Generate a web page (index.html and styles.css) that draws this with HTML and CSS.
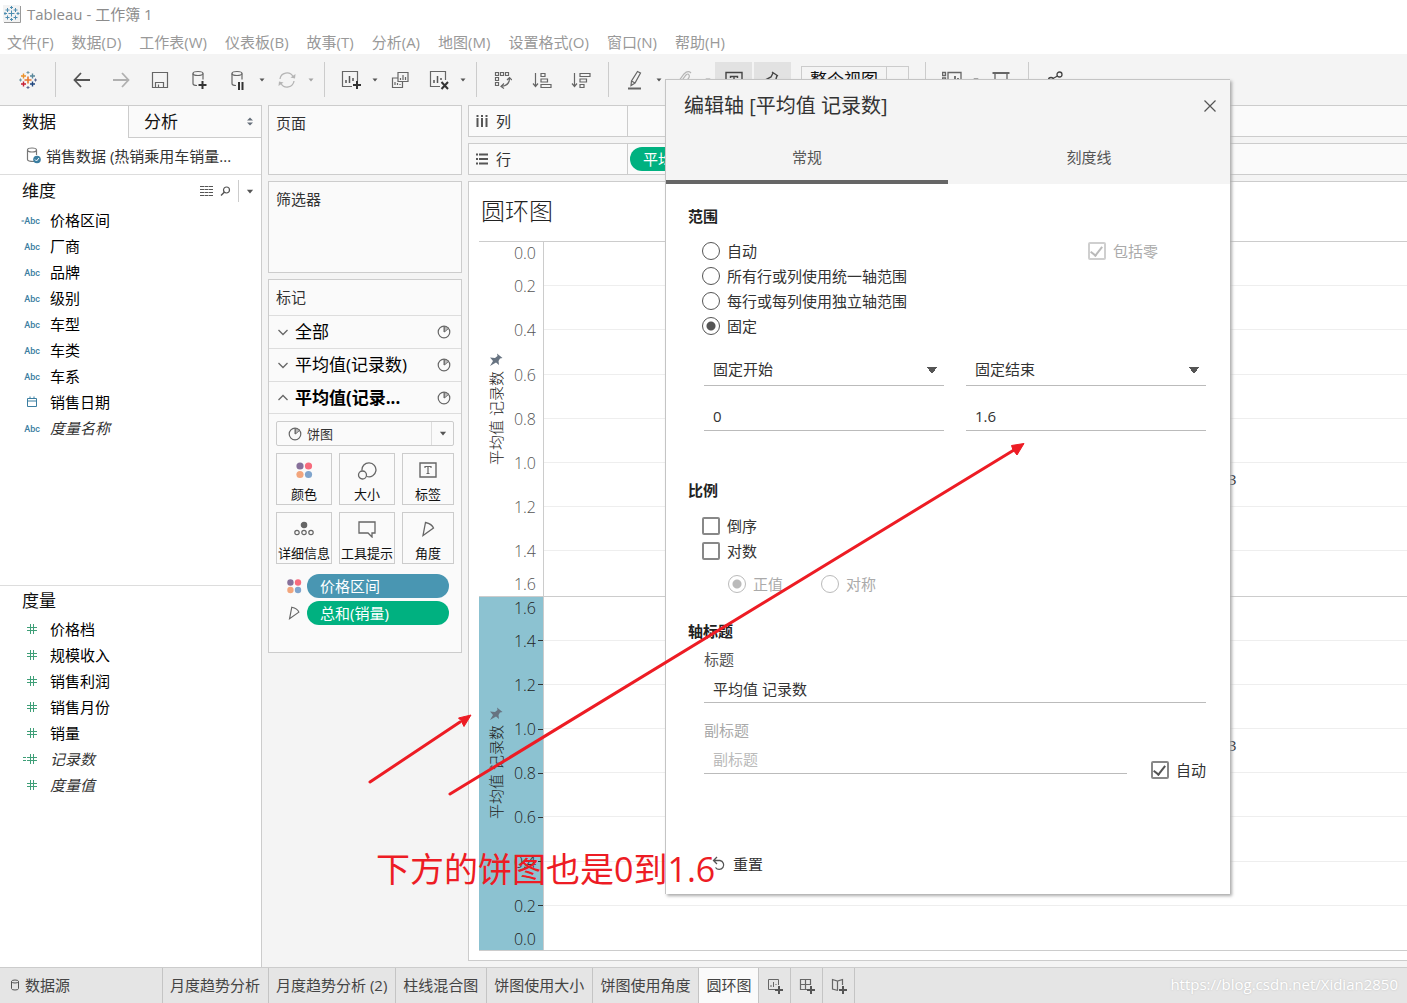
FILE: index.html
```html
<!DOCTYPE html>
<html lang="zh-CN">
<head>
<meta charset="utf-8">
<title>Tableau - 工作簿 1</title>
<link rel="stylesheet" href="styles.css">
</head>
<body>
<svg class="defs" aria-hidden="true">
  <symbol id="pie" viewBox="0 0 14 14"><circle cx="7" cy="7" r="5.800" fill="none" stroke="#666" stroke-width="1.200"/><path d="M7 1v6l4.500-4.200" fill="none" stroke="#666"/><path d="M7.500 1.500a5.500 5.500 0 0 1 4 2L7.500 7z" fill="#bbb" stroke="#666" stroke-width=".8"/></symbol>
  <symbol id="down" viewBox="0 0 12 12"><path d="M1.500 4l4.500 4.500L10.500 4" fill="none" stroke="#666" stroke-width="1.300"/></symbol>
  <symbol id="up" viewBox="0 0 12 12"><path d="M1.500 8L6 3.500 10.500 8" fill="none" stroke="#666" stroke-width="1.300"/></symbol>
  <symbol id="hash" viewBox="0 0 12 12"><path d="M4.500 1v10M7.500 1v10M1 4.500h10M1 7.500h10" stroke="#3f9f78" fill="none"/></symbol>
  <symbol id="dots" viewBox="0 0 18 18"><circle cx="5" cy="5" r="3.600" fill="#86709a"/><circle cx="13.500" cy="5" r="3.600" fill="#f76b7d"/><circle cx="5" cy="13.500" r="3.600" fill="#f2a57c"/><circle cx="13.500" cy="13.500" r="3.600" fill="#7fa4cc"/></symbol>
  <symbol id="angle" viewBox="0 0 16 18"><path d="M5.500 2.500Q12 4 13.500 8L3 15.500z" fill="none" stroke="#666" stroke-width="1.300"/></symbol>
  <symbol id="pin" viewBox="0 0 14 14"><path d="M8 .5l5.500 4.500-2.500.5-1.500 2.500.5 4-3-2.500L1 13l3-5L1 4.500l5 .5L8.500 3z" fill="#677381"/></symbol>
  <symbol id="caret" viewBox="0 0 6 4"><path d="M.5.5h5L3 3.500z" fill="#555"/></symbol>
</svg>

<header class="titlebar">
  <svg class="app-icon" viewBox="0 0 18 18"><rect x="0" y="0" width="17" height="17" fill="#f3f3f3"/><path d="M17.500 1v16.500H1" fill="none" stroke="#999"/><path d="M8.500 5.500v6M5.500 8.500h6M4.500 3v4M2.500 5h4M12.500 3v4M10.500 5h4M4.500 10.500v4M2.500 12.500h4M12.500 10.500v4M10.500 12.500h4M8.500 1v3M7 2.500h3M8.500 13v3M7 14.500h3M2 7v3M1 8.500h3M15 7v3M13.500 8.500h3" stroke="#4e8db0" fill="none"/></svg>
  <span>Tableau - 工作簿 1</span>
</header>
<nav class="menubar">
  <a href="#">文件(F)</a><a href="#">数据(D)</a><a href="#">工作表(W)</a><a href="#">仪表板(B)</a><a href="#">故事(T)</a><a href="#">分析(A)</a><a href="#">地图(M)</a><a href="#">设置格式(O)</a><a href="#">窗口(N)</a><a href="#">帮助(H)</a>
</nav>

<div class="toolbar">
  <button class="tool" aria-label="开始页"><svg width="18" height="18" viewBox="0 0 18 18" fill="none"><path d="M9 5.500v7M5.500 9h7" stroke="#e8762d" stroke-width="1.600"/><path d="M4.500 2.500v5M2 5h5" stroke="#eb9129" stroke-width="1.400"/><path d="M13.500 2.500v5M11 5h5" stroke="#59879b" stroke-width="1.400"/><path d="M4.500 10.500v5M2 13h5" stroke="#c72035" stroke-width="1.400"/><path d="M13.500 10.500v5M11 13h5" stroke="#1f457e" stroke-width="1.400"/><path d="M9 0v3M7.500 1.500h3M1.500 7.500v3M0 9h3" stroke="#7199a6"/><path d="M9 15v3M7.500 16.500h3M16.500 7.500v3M15 9h3" stroke="#5b6591"/></svg></button>
  <span class="sep"></span>
  <button class="tool" aria-label="后退"><svg width="18" height="16" viewBox="0 0 18 16"><path d="M8 1L1.500 8 8 15M2 8h15" fill="none" stroke="#555" stroke-width="1.800"/></svg></button>
  <button class="tool" aria-label="前进"><svg width="18" height="16" viewBox="0 0 18 16"><path d="M10 1l6.500 7-6.500 7M16 8H1" fill="none" stroke="#b0b0b0" stroke-width="1.800"/></svg></button>
  <button class="tool" aria-label="保存"><svg width="18" height="18" viewBox="0 0 18 18"><path d="M1.500 1.500h15v15h-15zM4.500 16v-4.500h8V16M7.500 16v-2.500" fill="none" stroke="#666" stroke-width="1.200"/></svg></button>
  <button class="tool" aria-label="新建数据源"><svg width="18" height="20" viewBox="0 0 18 20"><ellipse cx="8" cy="3.500" rx="5" ry="2" fill="none" stroke="#666" stroke-width="1.200"/><path d="M3 3.500v10q0 2 4 2M13 3.500v6" fill="none" stroke="#666" stroke-width="1.200"/><path d="M12.500 11v8M8.500 15h8" stroke="#333" stroke-width="2"/></svg></button>
  <button class="tool" aria-label="暂停自动更新"><svg width="18" height="20" viewBox="0 0 18 20"><ellipse cx="8" cy="3.500" rx="5" ry="2" fill="none" stroke="#666" stroke-width="1.200"/><path d="M3 3.500v10q0 2 4 2M13 3.500v6" fill="none" stroke="#666" stroke-width="1.200"/><path d="M10 12v8M13.500 12v8" stroke="#333" stroke-width="2"/></svg></button>
  <button class="drop" aria-label="更新选项"><svg width="6" height="4"><use href="#caret"/></svg></button>
  <button class="tool off" aria-label="运行更新"><svg width="18" height="18" viewBox="0 0 18 18"><path d="M2 8a7 7 0 0 1 13-2.500M16 10a7 7 0 0 1-13 2.500" fill="none" stroke="#777" stroke-width="1.300"/><path d="M17.500 3l-.5 4.500-4.500-1zM.5 15l.5-4.500 4.500 1z" fill="#777"/></svg></button>
  <button class="drop off" aria-label="运行选项"><svg width="6" height="4"><use href="#caret"/></svg></button>
  <span class="sep"></span>
  <button class="tool" aria-label="新建工作表"><svg width="20" height="20" viewBox="0 0 20 20"><path d="M11 16.500H1.500v-15h15V11" fill="none" stroke="#666" stroke-width="1.200"/><path d="M5 13v-3M8.500 13V6M12 11V8" stroke="#555" stroke-width="1.500"/><path d="M16 11v8M12 15h8" stroke="#333" stroke-width="2"/></svg></button>
  <button class="drop" aria-label="新建选项"><svg width="6" height="4"><use href="#caret"/></svg></button>
  <button class="tool" aria-label="复制工作表"><svg width="18" height="18" viewBox="0 0 18 18"><path d="M7 1.500h10v9H7zM7 7H1.500v9.500h10v-6M9.500 9V7M12 9V4M14.500 9V6M4 14v-3M6.500 14v-2M9 14v-1" fill="none" stroke="#666" stroke-width="1.200"/></svg></button>
  <button class="tool" aria-label="清除工作表"><svg width="20" height="20" viewBox="0 0 20 20"><path d="M11 16.500H1.500v-15h15V10" fill="none" stroke="#666" stroke-width="1.200"/><path d="M5 13v-3M8.500 13V6M12 10V8" stroke="#555" stroke-width="1.500"/><path d="M12.500 12l6.500 7M19 12l-6.500 7" stroke="#333" stroke-width="2"/></svg></button>
  <button class="drop" aria-label="清除选项"><svg width="6" height="4"><use href="#caret"/></svg></button>
  <span class="sep"></span>
  <button class="tool" aria-label="交换行和列"><svg width="18" height="18" viewBox="0 0 18 18" fill="none" stroke="#666"><path d="M1.500 1.500h3v3h-3zM6.500 1.500h3v3h-3zM11.500 1.500h3v3h-3zM1.500 6.500h3v3h-3zM1.500 11.500h3v3h-3zM15.500 7q.5 7-8 8.500M13 9l2.500-2.500L18 9M10 12.500l-3 3 3 2" stroke-width="1.200"/></svg></button>
  <button class="tool" aria-label="升序排序"><svg width="20" height="18" viewBox="0 0 20 18" fill="none" stroke="#666" stroke-width="1.200"><path d="M3.500 2v13M1 12.500L3.500 15.500 6 12.500M9 2.500h4v3H9zM9 8h6.500v3H9zM9 13.500h10v3H9z"/></svg></button>
  <button class="tool" aria-label="降序排序"><svg width="20" height="18" viewBox="0 0 20 18" fill="none" stroke="#666" stroke-width="1.200"><path d="M3.500 2v13M1 12.500L3.500 15.500 6 12.500M9 2.500h10v3H9zM9 8h6.500v3H9zM9 13.500h4v3H9z"/></svg></button>
  <span class="sep"></span>
  <button class="tool" aria-label="突出显示"><svg width="18" height="20" viewBox="0 0 18 20" fill="none" stroke="#666" stroke-width="1.200"><path d="M11.500 1.500l3 1.500-5.500 10-4 2.500.5-4.500zM5.500 11l3.500 2"/><path d="M2 18.500h13" stroke-width="2"/></svg></button>
  <button class="drop" aria-label="突出显示选项"><svg width="6" height="4"><use href="#caret"/></svg></button>
  <button class="tool off" aria-label="组成员"><svg width="18" height="20" viewBox="0 0 18 20" fill="none" stroke="#777" stroke-width="1.200"><path d="M5 13l6-8q2-2 3 0t-1 4l-6 8q-3 3-5 0t1-5l6-8q4-4 7-1"/></svg></button>
  <button class="drop off" aria-label="组选项"><svg width="6" height="4"><use href="#caret"/></svg></button>
  <button class="tool pressed" aria-label="显示标记标签"><svg width="18" height="18" viewBox="0 0 18 18" fill="none" stroke="#444"><path d="M1 1.500h16v13H1zM5.500 7V5.500h7V7M9 5.500V12" stroke-width="1.400"/></svg></button>
  <button class="tool pressed" aria-label="固定轴"><svg width="18" height="18" viewBox="0 0 18 18" fill="none" stroke="#444" stroke-width="1.400"><path d="M8 1l6 4M9 2L7 6 3 8l8 5 1-5 1-3.500M7 10.500L3 17"/></svg></button>
  <select class="fit" aria-label="适合"><option>整个视图</option></select>
  <span class="sep"></span>
  <button class="tool" aria-label="显示卡"><svg width="20" height="18" viewBox="0 0 20 18" fill="none" stroke="#666"><path d="M.5 1.500h3v3h-3zM.5 7h3v3h-3zM6 1.500h13v13H6z" stroke-width="1.300"/><path d="M13 12V5M16 12V7" stroke-width="1.800"/></svg></button>
  <button class="drop" aria-label="卡选项"><svg width="6" height="4"><use href="#caret"/></svg></button>
  <button class="tool" aria-label="演示模式"><svg width="18" height="18" viewBox="0 0 18 18" fill="none" stroke="#666"><path d="M.5 2h17" stroke-width="2"/><path d="M3 2v9.500h12V2M9 12v5" stroke-width="1.300"/></svg></button>
  <span class="sep"></span>
  <button class="tool" aria-label="共享"><svg width="18" height="18" viewBox="0 0 18 18" fill="none" stroke="#444" stroke-width="1.300"><circle cx="13.500" cy="3.500" r="2.500"/><circle cx="5" cy="9" r="2.500"/><circle cx="13.500" cy="14" r="2.500"/><path d="M11.500 5L7 7.500M7 10.500l4.500 2.500"/></svg></button>
</div>

<main class="workspace">
  <aside class="sidebar">
    <div class="side-tabs">
      <button class="side-tab">数据</button>
      <button class="side-tab side-tab-off">分析<svg width="6" height="9" viewBox="0 0 6 9"><path d="M0 3.500h6L3 .5zM0 5.500h6L3 8.500z" fill="#666f7a"/></svg></button>
    </div>
    <div class="source">
      <svg width="16" height="18" viewBox="0 0 16 18"><path d="M8 14.500q-6.500 0-6.500-2V3q0-2 4.500-2t4.500 2v5M1.500 3q0 2 4.500 2t4.500-2" fill="none" stroke="#777" stroke-width="1.200"/><circle cx="11" cy="12.500" r="3.800" fill="#3b7ea1"/><path d="M9 12.500l1.500 1.500 2.500-3" fill="none" stroke="#fff"/></svg>
      <span>销售数据 (热销乘用车销量...</span>
    </div>
    <section class="dims">
      <div class="section-head"><h2>维度</h2>
        <svg width="13" height="10" viewBox="0 0 13 10"><path d="M0 .5h13M0 3.500h13M0 6.500h13M0 9.500h13" stroke="#555" stroke-dasharray="4 .5"/></svg>
        <svg width="11" height="11" viewBox="0 0 11 11"><circle cx="6.500" cy="4" r="3" fill="none" stroke="#555" stroke-width="1.200"/><path d="M4.500 6L1 9.500" stroke="#555" stroke-width="1.500"/></svg>
        <span class="head-menu"><svg width="8" height="5"><use href="#caret"/></svg></span>
      </div>
      <ul class="fields">
        <li><i class="abc"><small>=</small>Abc</i>价格区间</li>
        <li><i class="abc">Abc</i>厂商</li>
        <li><i class="abc">Abc</i>品牌</li>
        <li><i class="abc">Abc</i>级别</li>
        <li><i class="abc">Abc</i>车型</li>
        <li><i class="abc">Abc</i>车类</li>
        <li><i class="abc">Abc</i>车系</li>
        <li><i class="glyph"><svg width="12" height="12" viewBox="0 0 12 12"><path d="M1.500 2.500h9v8h-9zM1.500 5h9M4 .5v2M8 .5v2" fill="none" stroke="#3b7ea1"/></svg></i>销售日期</li>
        <li class="gen"><i class="abc">Abc</i><em>度量名称</em></li>
      </ul>
    </section>
    <section class="measures">
      <div class="section-head"><h2>度量</h2></div>
      <ul class="fields">
        <li><i class="glyph"><svg width="12" height="12"><use href="#hash"/></svg></i>价格档</li>
        <li><i class="glyph"><svg width="12" height="12"><use href="#hash"/></svg></i>规模收入</li>
        <li><i class="glyph"><svg width="12" height="12"><use href="#hash"/></svg></i>销售利润</li>
        <li><i class="glyph"><svg width="12" height="12"><use href="#hash"/></svg></i>销售月份</li>
        <li><i class="glyph"><svg width="12" height="12"><use href="#hash"/></svg></i>销量</li>
        <li class="gen"><i class="glyph"><svg width="3" height="12" viewBox="0 0 3 12"><path d="M0 4.500h3M0 7.500h3" stroke="#3f9f78"/></svg><svg width="12" height="12"><use href="#hash"/></svg></i><em>记录数</em></li>
        <li class="gen"><i class="glyph"><svg width="12" height="12"><use href="#hash"/></svg></i><em>度量值</em></li>
      </ul>
    </section>
  </aside>

  <div class="cards">
    <section class="card pages"><h3>页面</h3></section>
    <section class="card filters"><h3>筛选器</h3></section>
    <section class="card marks">
      <h3>标记</h3>
      <button class="layer"><svg width="12" height="12"><use href="#down"/></svg><span>全部</span><svg width="14" height="14"><use href="#pie"/></svg></button>
      <button class="layer"><svg width="12" height="12"><use href="#down"/></svg><span>平均值(记录数)</span><svg width="14" height="14"><use href="#pie"/></svg></button>
      <button class="layer layer-on"><svg width="12" height="12"><use href="#up"/></svg><span>平均值(记录...</span><svg width="14" height="14"><use href="#pie"/></svg></button>
      <div class="marks-body">
        <div class="mark-type">
          <svg width="14" height="14"><use href="#pie"/></svg>
          <select aria-label="标记类型"><option>饼图</option></select>
          <span class="mark-drop"><svg width="8" height="5"><use href="#caret"/></svg></span>
        </div>
        <div class="mark-grid">
          <button><svg width="18" height="18"><use href="#dots"/></svg>颜色</button>
          <button><svg width="20" height="20" viewBox="0 0 20 20" fill="none" stroke="#666" stroke-width="1.300"><path d="M5 9.500a7 7 0 1 1 5 6"/><circle cx="5.500" cy="14" r="4"/></svg>大小</button>
          <button><svg width="18" height="18" viewBox="0 0 18 18" fill="none" stroke="#666"><path d="M1 2h16v14H1z" stroke-width="1.400"/><path d="M6 7V5.500h6V7M9 5.500v7M7.500 12.500h3" stroke-width="1.200"/></svg>标签</button>
          <button><svg width="20" height="18" viewBox="0 0 20 18" fill="none" stroke="#666" stroke-width="1.200"><circle cx="10" cy="5" r="2.700" fill="#666"/><circle cx="3" cy="12.500" r="2.200"/><circle cx="10" cy="12.500" r="2.200"/><circle cx="17" cy="12.500" r="2.200"/></svg>详细信息</button>
          <button><svg width="18" height="18" viewBox="0 0 18 18" fill="none" stroke="#666" stroke-width="1.300"><path d="M1 2h16v11h-3v4l-4-4H1z"/></svg>工具提示</button>
          <button><svg width="16" height="18"><use href="#angle"/></svg>角度</button>
        </div>
        <div class="encoding"><svg width="16" height="16"><use href="#dots"/></svg><span class="pill blue">价格区间</span></div>
        <div class="encoding"><svg width="16" height="16"><use href="#angle"/></svg><span class="pill green">总和(销量)</span></div>
      </div>
    </section>
  </div>

  <div class="canvas">
    <div class="shelf"><div class="shelf-name"><svg width="12" height="12" viewBox="0 0 12 12"><path d="M1.500 0v2M6 0v2M10.500 0v2M1.500 3v9M6 3v9M10.500 3v9" stroke="#555" stroke-width="2"/></svg>列</div></div>
    <div class="shelf"><div class="shelf-name"><svg width="12" height="12" viewBox="0 0 12 12"><path d="M0 1.500h2M0 6h2M0 10.500h2M3 1.500h9M3 6h9M3 10.500h9" stroke="#555" stroke-width="2"/></svg>行</div><span class="pill green">平均值(记录数)</span></div>
    <section class="sheet">
      <h1>圆环图</h1>
      <div class="pane">
        <div class="axis">
          <div class="axis-title"><svg width="14" height="14"><use href="#pin"/></svg><span>平均值 记录数</span></div>
          <ol class="ticks"><li>0.0</li><li>0.2</li><li>0.4</li><li>0.6</li><li>0.8</li><li>1.0</li><li>1.2</li><li>1.4</li><li>1.6</li></ol>
        </div>
        <div class="plot"><i></i><i></i><i></i><i></i><i></i><i><b>3</b></i><i></i><i></i></div>
      </div>
      <div class="pane selected">
        <div class="axis">
          <div class="axis-title"><svg width="14" height="14"><use href="#pin"/></svg><span>平均值 记录数</span></div>
          <ol class="ticks"><li>1.6</li><li>1.4</li><li>1.2</li><li>1.0</li><li>0.8</li><li>0.6</li><li>0.4</li><li>0.2</li><li>0.0</li></ol>
        </div>
        <div class="plot"><i></i><i></i><i></i><i><b>3</b></i><i></i><i></i><i></i><i></i></div>
      </div>
    </section>
  </div>
</main>

<footer class="sheets">
  <button class="sheet-tab data-tab"><svg width="10" height="12" viewBox="0 0 10 12"><path d="M1.500 2.500v7q0 1.500 3.500 1.500t3.500-1.500v-7Q8.500 1 5 1T1.500 2.500Q1.500 4 5 4t3.500-1.500" fill="none" stroke="#555"/></svg>数据源</button>
  <button class="sheet-tab">月度趋势分析</button>
  <button class="sheet-tab">月度趋势分析 (2)</button>
  <button class="sheet-tab">柱线混合图</button>
  <button class="sheet-tab">饼图使用大小</button>
  <button class="sheet-tab">饼图使用角度</button>
  <button class="sheet-tab current">圆环图</button>
  <button class="sheet-tab add" aria-label="新建工作表"><svg width="16" height="16" viewBox="0 0 16 16"><path d="M8 11.500H1.500v-10h10V7M4 9V7M6.500 9V4M9 7V6" fill="none" stroke="#666"/><path d="M12 8v8M8 12h8" stroke="#555" stroke-width="2"/></svg></button>
  <button class="sheet-tab add" aria-label="新建仪表板"><svg width="16" height="16" viewBox="0 0 16 16"><path d="M8 11.500H1.500v-10h10V7M6.500 1.500v10M1.500 6.500h10" fill="none" stroke="#666" stroke-width="1.200"/><path d="M12 8v8M8 12h8" stroke="#555" stroke-width="2"/></svg></button>
  <button class="sheet-tab add" aria-label="新建故事"><svg width="16" height="16" viewBox="0 0 16 16"><path d="M7 12.500L1.500 11V1.500L6.500 3l5-1.500V7M6.500 3v9" fill="none" stroke="#666" stroke-width="1.200"/><path d="M12 8v8M8 12h8" stroke="#555" stroke-width="2"/></svg></button>
  <span class="watermark">https://blog.csdn.net/Xidian2850</span>
</footer>

<form class="dialog" role="dialog" aria-labelledby="dlg-title">
  <div class="dialog-top">
    <div class="dialog-head"><h2 id="dlg-title">编辑轴 [平均值 记录数]</h2>
      <button type="button" aria-label="关闭"><svg width="12" height="12" viewBox="0 0 12 12"><path d="M.5.5l11 11M11.500.5l-11 11" stroke="#555" stroke-width="1.200"/></svg></button></div>
    <div class="dialog-tabs"><button type="button" class="on">常规</button><button type="button">刻度线</button></div>
  </div>
  <div class="dialog-body">
    <h3>范围</h3>
    <div class="range">
      <div class="stack">
        <label><input type="radio" name="range">自动</label>
        <label><input type="radio" name="range">所有行或列使用统一轴范围</label>
        <label><input type="radio" name="range">每行或每列使用独立轴范围</label>
        <label><input type="radio" name="range" checked>固定</label>
      </div>
      <label class="dim zero"><input type="checkbox" checked disabled>包括零</label>
    </div>
    <div class="pair selects">
      <select aria-label="开始方式"><option>固定开始</option></select>
      <select aria-label="结束方式"><option>固定结束</option></select>
    </div>
    <div class="pair values">
      <input type="text" value="0" aria-label="开始值">
      <input type="text" value="1.6" aria-label="结束值">
    </div>
    <h3 class="scale-head">比例</h3>
    <div class="stack">
      <label><input type="checkbox">倒序</label>
      <label><input type="checkbox">对数</label>
    </div>
    <div class="log-kind">
      <label class="dim"><input type="radio" name="log" checked disabled>正值</label>
      <label class="dim"><input type="radio" name="log" disabled>对称</label>
    </div>
    <h3 class="title-head">轴标题</h3>
    <div class="titles">
      <label class="cap" for="t1">标题</label>
      <input id="t1" type="text" value="平均值 记录数">
      <label class="cap cap-sub" for="t2">副标题</label>
      <div class="sub-row">
        <input id="t2" type="text" placeholder="副标题">
        <label><input type="checkbox" checked>自动</label>
      </div>
    </div>
    <button type="button" class="reset"><svg width="14" height="16" viewBox="0 0 14 16"><path d="M2 4.500h6a4.500 4.500 0 1 1-4.500 7M5 1L1.500 4.500 5 8" fill="none" stroke="#555" stroke-width="1.300"/></svg>重置</button>
  </div>
</form>

<svg class="arrows" width="1100" height="820" viewBox="0 0 1100 820" aria-hidden="true">
  <g stroke="#ed1c24" stroke-width="3" stroke-linecap="round"><path d="M370 782L460 722"/><path d="M450 794L1014 450"/></g>
  <path d="M471 715L464 726.500 461 720.500 458.500 718zM1024 443.500L1017 455 1013 450 1011.500 445.500z" fill="#ed1c24" stroke="#ed1c24"/>
</svg>
<p class="note">下方的饼图也是0到1.6</p>
</body>
</html>
```
FILE: styles.css
```css
* { box-sizing: border-box; }
body {
  margin: 0;
  min-height: 100vh;
  position: relative;
  display: flex;
  flex-direction: column;
  overflow-x: hidden;
  background: #f4f4f4;
  color: #111;
  font: 15px/20px "Open Sans", "Noto Sans CJK SC", sans-serif;
}
h1, h2, h3, p, ul, ol { margin: 0; padding: 0; font-weight: 400; }
h3 { font-size: 15px; }
ul, ol { list-style: none; }
button, select, input { font: inherit; color: inherit; background: none; border: 0; padding: 0; margin: 0; border-radius: 0; appearance: none; }
svg { flex: none; display: block; }
a { color: inherit; text-decoration: none; }
i { font-style: normal; }
.defs { position: absolute; width: 0; height: 0; }

.titlebar { height: 28px; padding-left: 3px; display: flex; align-items: center; gap: 6px; background: #fff; color: #8c8c8c; }
.app-icon { width: 18px; height: 18px; }
.menubar { height: 26px; padding: 4px 7px 0; display: flex; gap: 18px; background: #fff; color: #999; white-space: nowrap; }

.toolbar { height: 51px; padding-left: 8px; display: flex; align-items: center; }
.tool { width: 39px; height: 36px; flex: none; display: flex; align-items: center; justify-content: center; }
.drop { width: 10px; height: 36px; flex: none; display: flex; align-items: center; justify-content: center; }
.off { opacity: .5; }
.sep { width: 1px; height: 35px; flex: none; margin: 0 6px 0 8px; background: #ccc; }
.pressed { width: 37px; margin-left: 2px; background: #e2e2e2; }
.fit { width: 108px; height: 28px; margin: 0 8px 0 10px; padding-left: 8px; font-size: 17px; border: 1px solid #ccc; background: linear-gradient(#ccc, #ccc) 84px 0 / 1px 100% no-repeat, linear-gradient(#555, #555) 93px 12px / 6px 1px no-repeat; }

.workspace { flex: 1; display: flex; gap: 6px; }
.sidebar { width: 262px; flex: none; display: flex; flex-direction: column; background: #fff; border: solid #ccc; border-width: 1px 1px 0 0; }
.side-tabs { display: grid; grid-template-columns: 128px 1fr; height: 32px; font-size: 17px; }
.side-tab { padding-left: 22px; text-align: left; }
.side-tab-off { padding: 0 8px 0 15px; display: flex; align-items: center; justify-content: space-between; background: #fafafa; border: solid #ccc; border-width: 0 0 1px 1px; }
.source { height: 37px; padding-left: 26px; display: flex; align-items: center; gap: 4px; border-bottom: 1px solid #ddd; color: #333; white-space: nowrap; }
.dims { flex: 411; }
.measures { flex: 381; border-top: 1px solid #ddd; }
.section-head { height: 32px; padding: 0 7px 0 22px; display: flex; align-items: center; gap: 7px; }
.measures .section-head { height: 30px; }
.section-head h2 { flex: 1; font-size: 17px; line-height: 24px; }
.head-menu { height: 22px; padding-left: 7px; display: flex; align-items: center; border-left: 1px solid #ccc; }
.fields li { height: 26px; display: flex; align-items: center; gap: 10px; color: #000; }
.fields .gen { color: #333; }
.abc, .glyph { width: 40px; display: flex; justify-content: flex-end; flex: none; }
.abc { padding-top: 1px; font: 500 9px/14px Roboto, sans-serif; color: #3b7ea1; }
.abc small { font-size: 6px; }
.glyph { padding-right: 2px; }

.cards { width: 194px; flex: none; display: flex; flex-direction: column; gap: 6px; }
.card { background: #fafafa; border: 1px solid #ccc; }
.card h3 { padding: 7px 7px 8px; color: #333; }
.pages { height: 70px; }
.filters { height: 92px; }
.layer { width: 100%; height: 33px; padding: 0 10px 0 8px; display: flex; align-items: center; gap: 6px; border-top: 1px solid #ddd; font-size: 17px; color: #000; white-space: nowrap; }
.layer span { flex: 1; text-align: left; }
.layer-on { height: 32px; font-weight: 700; }
.marks-body { padding: 7px 7px 24px; border-top: 1px solid #ddd; }
.mark-type { height: 25px; padding-left: 11px; display: flex; align-items: center; gap: 5px; border: 1px solid #ccc; border-radius: 2px; color: #333; font-size: 13px; }
.mark-type select { flex: 1; }
.mark-drop { align-self: stretch; width: 22px; display: flex; align-items: center; justify-content: center; border-left: 1px solid #ddd; }
.mark-grid { margin: 7px 0 10px; display: grid; grid-template-columns: 56px 56px 1fr; gap: 7px; }
.mark-grid button { height: 52px; display: flex; flex-direction: column; align-items: center; justify-content: space-between; padding-top: 7px; border: 1px solid #ccc; font-size: 13px; white-space: nowrap; }
.encoding { display: grid; grid-template-columns: 31px 1fr; align-items: center; padding-right: 5px; margin-bottom: 3px; }
.encoding svg { margin-left: 10px; }
.pill { height: 24px; padding-left: 13px; border-radius: 12px; line-height: 24px; color: #fff; white-space: nowrap; }
.blue { background: #4996b2; }
.green { background: #00b180; }

.canvas { flex: 1; min-width: 0; display: flex; flex-direction: column; gap: 6px; padding-bottom: 6px; }
.shelf { height: 32px; display: flex; align-items: center; gap: 2px; border: solid #ccc; border-width: 1px 0 1px 1px; background: #fafafa; }
.shelf-name { width: 159px; height: 100%; padding-left: 7px; display: flex; align-items: center; gap: 8px; border-right: 1px solid #ccc; color: #333; }
.shelf .pill { width: 142px; }
.sheet { flex: 1; display: flex; flex-direction: column; padding: 0 0 9px 10px; border: solid #ccc; border-width: 1px 0 1px 1px; background: #fff; }
.sheet h1 { height: 59px; padding-left: 2px; font-size: 24px; line-height: 58px; font-weight: 300; color: #222; }
.pane { flex: 1; display: flex; border-top: 1px solid #ccc; }
.pane.selected { border-bottom: 1px solid #ccc; }
.axis { width: 64px; display: flex; }
.selected .axis { background: #8cc2d1; }
.axis-title { width: 36px; padding-bottom: 20px; display: flex; flex-direction: column; align-items: center; justify-content: center; gap: 4px; font-weight: 300; color: #222; }
.axis-title span { writing-mode: vertical-rl; text-orientation: sideways; transform: rotate(180deg); white-space: nowrap; }
.ticks { flex: 1; display: grid; grid-template-rows: 1fr repeat(7, 2fr) 1fr; }
.ticks li { display: flex; align-items: center; justify-content: flex-end; gap: 2px; padding-right: 7px; font-size: 16px; font-weight: 300; color: #555; }
.selected .ticks li { color: #222; padding-right: 0; }
.selected .ticks li::after { content: ""; width: 5px; height: 1px; background: #333; }
.selected .ticks li:first-child::after, .selected .ticks li:last-child::after { background: none; }
.plot { flex: 1; display: grid; grid-template-rows: repeat(8, 1fr); border-left: 1px solid #ccc; }
.plot i { border-bottom: 1px solid #eee; padding-left: 684px; }
.plot i:last-child { border-bottom: 0; }
.plot b { display: block; padding-top: 6px; font-weight: 400; color: #333; }

.sheets { height: 36px; display: flex; background: #e5e5e5; border-top: 1px solid #ccc; color: #444; }
.sheet-tab { padding: 0 8px 2px 7px; border-right: 1px solid #c4c4c4; white-space: nowrap; }
.data-tab { width: 163px; padding-left: 10px; display: flex; align-items: center; gap: 5px; }
.current { padding: 0 7px 2px; background: #fafafa; }
.add { width: 32px; display: flex; align-items: center; justify-content: center; padding: 0; }
.watermark { margin-left: auto; padding: 6px 9px 0 0; color: #fff; font-size: 15px; text-shadow: 0 0 2px #bbb; }

.dialog { position: absolute; left: 665px; top: 79px; width: 565px; background: #fff; border: solid #c4c4c4; border-width: 1px 0 0 1px; box-shadow: 2px 2px 3px #aaa; color: #333; }
.dialog-top { background: #f4f4f4; }
.dialog-head { height: 52px; padding: 0 14px 0 18px; display: flex; align-items: center; justify-content: space-between; }
.dialog-head h2 { font-size: 20px; line-height: 28px; }
.dialog-tabs { height: 52px; display: grid; grid-template-columns: 1fr 1fr; color: #555; }
.dialog-tabs button { padding-bottom: 2px; }
.dialog-tabs .on { border-bottom: 4px solid #666; padding: 2px 0 0; }
.dialog-body { padding: 22px 24px 20px 22px; }
.dialog-body h3 { height: 20px; font-weight: 700; color: #222; }
.range { display: flex; justify-content: space-between; margin-top: 12px; }
.stack { padding-left: 14px; }
.dialog-body label { display: flex; align-items: center; gap: 7px; height: 25px; }
.dialog-body .dim { color: #aaa; }
.zero { margin-right: 48px; }
.dialog input[type=radio], .dialog input[type=checkbox] { width: 18px; height: 18px; flex: none; border: 1px solid #555; background: #fff center / 18px 18px no-repeat; }
.dialog input[type=radio] { border-radius: 50%; }
.dialog input[type=radio]:checked { background: radial-gradient(circle, #555 4px, #fff 5px); }
.dialog input[type=checkbox] { border: 2px solid #888; border-radius: 2px; display: grid; place-items: center; }
.dialog input[type=checkbox]:checked::after { content: ""; width: 5px; height: 10px; border: solid #555; border-width: 0 2px 2px 0; transform: translateY(-1px) rotate(38deg); }
.dialog input:disabled { opacity: .4; }
.pair { display: grid; grid-template-columns: 1fr 1fr; gap: 22px; margin-left: 16px; }
.selects { margin-top: 15px; }
.pair select { height: 33px; padding: 0 9px 1px; border-bottom: 1px solid #bbb; background: conic-gradient(from -36deg at 50% 100%, #555 72deg, transparent 0) right 7px top 14px / 10px 7px no-repeat; }
.values { margin-top: 13px; }
.dialog input[type=text] { width: 100%; height: 29px; padding-left: 9px; border-bottom: 1px solid #bbb; }
.dialog .values input[type=text] { height: 32px; padding-top: 2px; }
.dialog-body .scale-head { margin: 49px 0 13px; }
.log-kind { margin: 8px 0 0 40px; display: flex; gap: 38px; }
.dialog-body .title-head { margin-top: 25px; }
.titles { margin: 8px 0 72px 16px; }
.dialog-body .cap { height: 20px; margin-bottom: 5px; color: #555; }
.dialog-body .cap-sub { margin-top: 17px; color: #aaa; }
.sub-row { display: flex; gap: 24px; }
.sub-row label { margin-top: 12px; white-space: nowrap; }
.sub-row input::placeholder { color: #bbb; opacity: 1; }
.reset { margin-left: 24px; display: flex; align-items: center; gap: 7px; line-height: 20px; }

.arrows { position: absolute; left: 0; top: 0; pointer-events: none; }
.note { position: absolute; left: 376px; top: 847px; font-size: 34px; line-height: 44px; color: #ed1c24; white-space: nowrap; }
```
